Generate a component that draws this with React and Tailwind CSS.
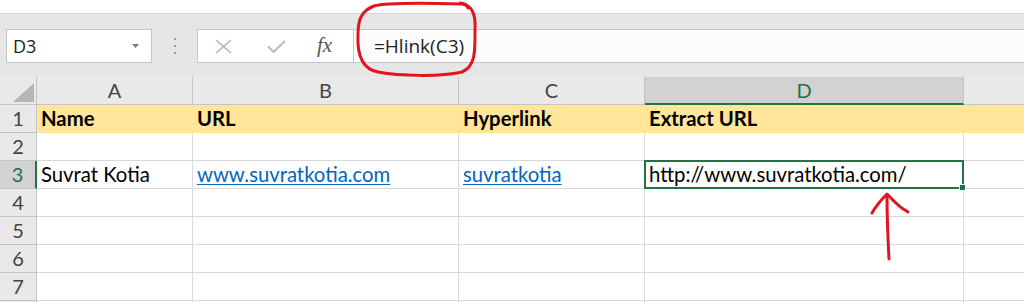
const COLS = ["A", "B", "C", "D"];

const ROWS = [
  {
    n: 1,
    fill: true,
    cells: [
      { t: "Name", bold: true },
      { t: "URL", bold: true },
      { t: "Hyperlink", bold: true },
      { t: "Extract URL", bold: true },
      {},
    ],
  },
  { n: 2, cells: [{}, {}, {}, {}, {}] },
  {
    n: 3,
    active: true,
    cells: [
      { t: "Suvrat Kotia" },
      { t: "www.suvratkotia.com", link: true },
      { t: "suvratkotia", link: true },
      { t: "http://www.suvratkotia.com/", selected: true },
      {},
    ],
  },
  { n: 4, cells: [{}, {}, {}, {}, {}] },
  { n: 5, cells: [{}, {}, {}, {}, {}] },
  { n: 6, cells: [{}, {}, {}, {}, {}] },
  { n: 7, cells: [{}, {}, {}, {}, {}] },
];

function FormulaBar() {
  return (
    <div className="h-[64px] bg-[#e6e6e6] border-t border-[#d6d6d6] pt-[15px] flex items-start">
      {/* Name box */}
      <div className="ml-[6px] w-[146px] h-[34px] bg-white border border-[#c6c6c6] flex items-center justify-between pl-[6px] pr-[12px]">
        <span className="text-[18px] text-[#222] font-['Open_Sans',sans-serif] leading-none">D3</span>
        <svg width="7" height="4" viewBox="0 0 7 4">
          <path d="M0 0 L7 0 L3.5 4 Z" fill="#7a7a7a" />
        </svg>
      </div>

      {/* grip dots */}
      <div className="w-[45px] h-[34px] flex flex-col items-center justify-center gap-[5px]">
        <span className="w-[2px] h-[2px] bg-[#9c9c9c]" />
        <span className="w-[2px] h-[2px] bg-[#9c9c9c]" />
        <span className="w-[2px] h-[2px] bg-[#9c9c9c]" />
      </div>

      {/* Formula input */}
      <div className="flex-1 h-[34px] bg-[#fcfcfc] border-y border-[#c6c6c6] flex items-center">
        <div className="w-[157px] h-full bg-white border-x border-[#c6c6c6] flex items-center">
          <svg className="ml-[17px]" width="17" height="15" viewBox="0 0 17 15">
            <path d="M1 1 L16 14 M16 1 L1 14" stroke="#b4b4b4" strokeWidth="1.6" fill="none" />
          </svg>
          <svg className="ml-[35px]" width="19" height="13" viewBox="0 0 19 13">
            <path d="M1 6.5 L6.5 12 L18 1" stroke="#b9b9b9" strokeWidth="2" fill="none" />
          </svg>
          <span className="ml-[31px] text-[21px] italic text-[#555] font-['Liberation_Serif',serif] leading-none pb-[2px]">
            fx
          </span>
        </div>
        <span className="ml-[20px] text-[19px] text-[#222] font-['Open_Sans',sans-serif] leading-none">
          =Hlink(C3)
        </span>
      </div>
    </div>
  );
}

function HeaderRow() {
  return (
    <div className="grid grid-cols-[37px_156px_266px_186px_319px_1fr] h-[28px] bg-[#e9e9e9]">
      <div className="border-r border-b border-[#c4c4c4] relative">
        <svg className="absolute left-[13px] top-[6px]" width="21" height="19" viewBox="0 0 21 19">
          <path d="M21 0 L21 19 L0 19 Z" fill="#b6b6b6" />
        </svg>
      </div>
      {COLS.map((c) => {
        const sel = c === "D";
        return (
          <div
            key={c}
            className={
              sel
                ? "flex items-end justify-center bg-[#d2d2d2] border-r border-[#c4c4c4] border-b-2 border-b-[#217346] text-[#217346] text-[20px] leading-[24px] pb-[1px]"
                : "flex items-end justify-center border-r border-b border-[#c4c4c4] text-[#444] text-[20px] leading-[24px] pb-[2px]"
            }
          >
            {c}
          </div>
        );
      })}
      <div className="border-b border-[#c4c4c4]" />
    </div>
  );
}

function Cell({ cell, fill, last }) {
  const base =
    "relative flex items-end h-[28px] px-[4px] pb-[2px] leading-[24px] text-[20.3px] whitespace-nowrap border-b";
  const grid = fill
    ? "bg-[#ffe699] border-[#ffe699]"
    : last
    ? "bg-white border-[#d9d9d9]"
    : "bg-white border-r border-[#d9d9d9]";
  const text = cell.link
    ? "text-[#0563c1] underline underline-offset-[2px] decoration-1"
    : cell.bold
    ? "text-black font-bold"
    : "text-black";
  return (
    <div className={`${base} ${grid} ${fill && !last ? "border-r" : ""}`}>
      <span className={text}>{cell.t}</span>
      {cell.selected && (
        <div className="absolute -left-[1px] -top-[1px] -right-[1px] -bottom-[1px] border-2 border-[#217346] z-10">
          <span className="absolute -right-[4px] -bottom-[4px] w-[7px] h-[7px] bg-[#217346] border border-white" />
        </div>
      )}
    </div>
  );
}

function Sheet() {
  return (
    <div className="flex flex-col">
      {ROWS.map((row) => (
        <div
          key={row.n}
          className="grid grid-cols-[37px_156px_266px_186px_319px_1fr]"
        >
          <div
            className={
              row.active
                ? "flex items-end justify-center h-[28px] bg-[#d2d2d2] border-r-2 border-r-[#217346] border-b border-b-[#c4c4c4] text-[#217346] text-[20px] leading-[24px] pb-[2px]"
                : "flex items-end justify-center h-[28px] bg-[#e9e9e9] border-r border-b border-[#c4c4c4] text-[#444] text-[20px] leading-[24px] pb-[2px]"
            }
          >
            {row.n}
          </div>
          {row.cells.map((cell, i) => (
            <Cell key={i} cell={cell} fill={row.fill} last={i === 4} />
          ))}
        </div>
      ))}
      <div className="grid grid-cols-[37px_156px_266px_186px_319px_1fr] h-[2px]">
        <div className="bg-[#e9e9e9] border-r border-[#c4c4c4]" />
        <div className="border-r border-[#d9d9d9]" />
        <div className="border-r border-[#d9d9d9]" />
        <div className="border-r border-[#d9d9d9]" />
        <div className="border-r border-[#d9d9d9]" />
        <div />
      </div>
    </div>
  );
}

function Annotations() {
  return (
    <svg
      className="absolute inset-0 pointer-events-none z-20"
      width="1024"
      height="302"
      viewBox="0 0 1024 302"
    >
      <g stroke="#e0151d" strokeWidth="3" fill="none" strokeLinecap="round" strokeLinejoin="round">
        <path d="M374 6 C388 2, 430 3, 462 4 C471 5, 476 13, 475 30 C475 50, 476 66, 462 72 C440 77, 400 76, 378 72 C362 69, 357 55, 358 35 C358 20, 361 11, 374 6" />
        <path d="M460 3 C464 3, 467 5, 468 8" />
        <path d="M889 259 C888 240, 887 215, 887 196" />
        <path d="M872 213 C876 206, 882 199, 887 194 C893 200, 899 207, 905 210 L908 212" />
      </g>
    </svg>
  );
}

export default function App() {
  return (
    <div className="relative w-[1024px] h-[302px] overflow-hidden bg-white font-['Lato',sans-serif]">
      <div className="h-[13px] bg-white" />
      <FormulaBar />
      <HeaderRow />
      <Sheet />
      <Annotations />
    </div>
  );
}
